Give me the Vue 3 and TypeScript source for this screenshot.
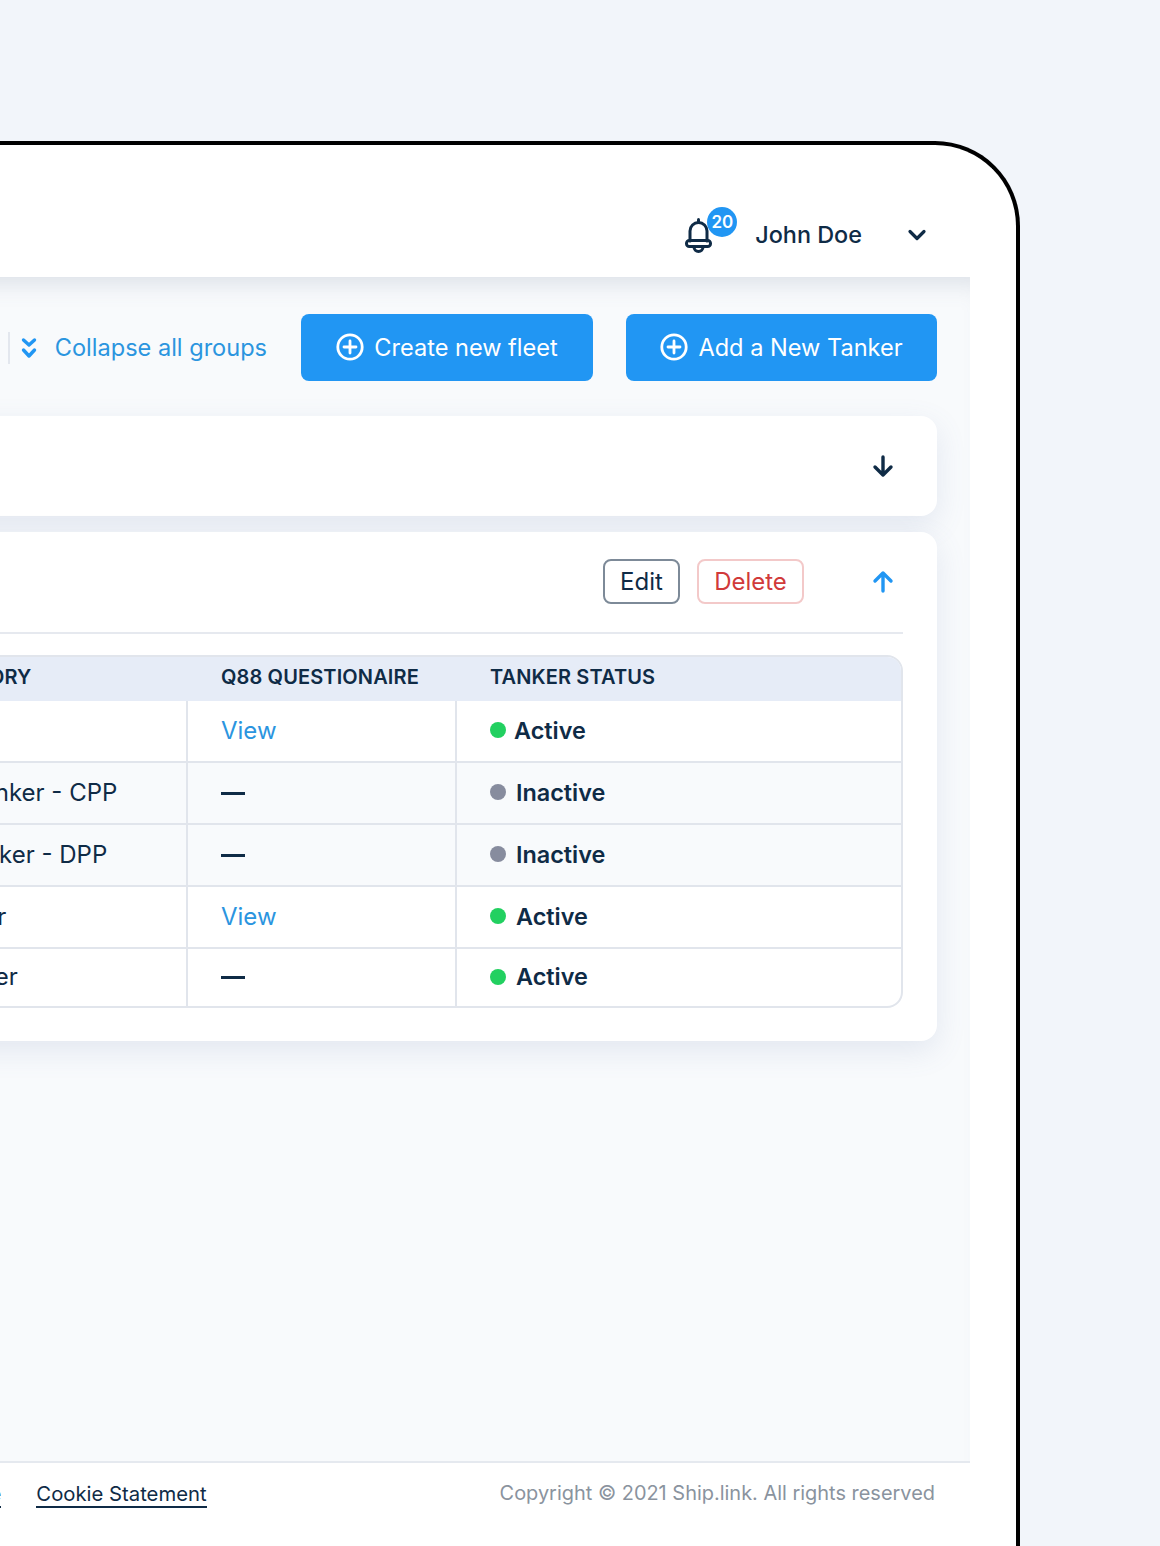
<script setup lang="ts">
interface Row {
  category: string;
  q88: boolean;
  active: boolean;
  shaded: boolean;
  gap: number;
}

const rows: Row[] = [
  { category: 'Tanker', q88: true, active: true, shaded: false, gap: 8 },
  { category: 'Product Tanker - CPP', q88: false, active: false, shaded: true, gap: 10 },
  { category: 'Lighter Tanker - DPP', q88: false, active: false, shaded: true, gap: 10 },
  { category: 'Bulk Carrier', q88: true, active: true, shaded: false, gap: 10 },
  { category: 'Grain Carrier', q88: false, active: true, shaded: false, gap: 10 },
];
</script>

<template>
  <div class="page">
    <div class="frame">
      <header class="topbar">
        <div class="bell">
          <svg width="30" height="36" viewBox="0 0 30 36" fill="none" stroke="#0f2b46" stroke-width="3" stroke-linecap="round" stroke-linejoin="round">
            <path d="M15.5 2.5v3" />
            <path d="M7 24V14a8.5 8.5 0 0 1 17 0v10" />
            <rect x="3.5" y="23.5" width="24" height="6" rx="2.8" />
            <path d="M11 30a4.5 4.5 0 0 0 9 0" />
          </svg>
          <span class="badge">20</span>
        </div>
        <span class="user">John Doe</span>
        <svg class="caret" width="20" height="12" viewBox="0 0 20 12" fill="none" stroke="#0f2b46" stroke-width="3.2" stroke-linecap="round" stroke-linejoin="round">
          <path d="M3 2.5l7 7 7-7" />
        </svg>
      </header>

      <main class="main">
        <div class="toolbar">
          <span class="divider"></span>
          <svg class="chevrons" width="16" height="22" viewBox="0 0 16 22" fill="none" stroke="#2196f3" stroke-width="3.4" stroke-linecap="round" stroke-linejoin="round">
            <path d="M2.5 3l5.5 5 5.5-5" />
            <path d="M2.5 13l5.5 6 5.5-6" />
          </svg>
          <span class="collapse">Collapse all groups</span>
          <button class="primary fleet">
            <svg width="28" height="28" viewBox="0 0 28 28" fill="none" stroke="#fff" stroke-width="2.8" stroke-linecap="round">
              <circle cx="14" cy="14" r="12.2" />
              <path d="M14 8v12M8 14h12" />
            </svg>
            Create new fleet
          </button>
          <button class="primary tanker">
            <svg width="28" height="28" viewBox="0 0 28 28" fill="none" stroke="#fff" stroke-width="2.8" stroke-linecap="round">
              <circle cx="14" cy="14" r="12.2" />
              <path d="M14 8v12M8 14h12" />
            </svg>
            Add a New Tanker
          </button>
        </div>

        <section class="card collapsed">
          <svg class="arrow" width="24" height="24" viewBox="0 0 24 24" fill="none" stroke="#0f2b46" stroke-width="3.4" stroke-linecap="round" stroke-linejoin="round">
            <path d="M12 3v18M4 13l8 8 8-8" />
          </svg>
        </section>

        <section class="card expanded">
          <div class="card-head">
            <button class="edit">Edit</button>
            <button class="delete">Delete</button>
            <svg class="arrow" width="24" height="24" viewBox="0 0 24 24" fill="none" stroke="#2196f3" stroke-width="3.4" stroke-linecap="round" stroke-linejoin="round">
              <path d="M12 21V3M4 11l8-8 8 8" />
            </svg>
          </div>

          <div class="table">
            <div class="row head">
              <div class="cell">SHIP CATEGORY</div>
              <div class="cell">Q88 QUESTIONAIRE</div>
              <div class="cell">TANKER STATUS</div>
            </div>
            <div v-for="row in rows" :key="row.category" class="row" :class="{ shaded: row.shaded }">
              <div class="cell">{{ row.category }}</div>
              <div class="cell sep">
                <a v-if="row.q88" class="view">View</a>
                <span v-else class="dash"></span>
              </div>
              <div class="cell sep status" :style="{ gap: row.gap + 'px' }">
                <span class="dot" :class="{ off: !row.active }"></span>
                {{ row.active ? 'Active' : 'Inactive' }}
              </div>
            </div>
          </div>
        </section>
      </main>

      <footer class="footer">
        <div class="links">
          <a>Terms of Service</a>
          <a>Cookie Statement</a>
        </div>
        <span class="copy">Copyright © 2021 Ship.link. All rights reserved</span>
      </footer>
    </div>
  </div>
</template>

<style>
html,
body {
  margin: 0;
  background: #f2f5fa;
}
</style>

<style scoped>
.page {
  height: 1546px;
  overflow: hidden;
  background: #f2f5fa;
  font-family: Inter, "Liberation Sans", sans-serif;
  color: #0f2b46;
}

.frame {
  box-sizing: border-box;
  width: 1420px;
  height: 1405px;
  margin: 141px 0 0 -400px;
  padding-right: 46px;
  background: #fff;
  border-top: 4px solid #000;
  border-right: 4px solid #000;
  border-top-right-radius: 85px;
  display: flex;
  flex-direction: column;
}

.topbar {
  height: 132px;
  box-sizing: border-box;
  padding: 48px 43px 0 0;
  display: flex;
  align-items: center;
  justify-content: flex-end;
}

.bell {
  position: relative;
  width: 30px;
  height: 36px;
  margin-right: 42px;
}

.bell svg {
  display: block;
}

.badge {
  position: absolute;
  left: 24px;
  top: -10px;
  width: 30px;
  height: 30px;
  border-radius: 50%;
  background: #2196f3;
  color: #fff;
  font-size: 17px;
  font-weight: 600;
  line-height: 30px;
  text-align: center;
}

.user {
  font-size: 23.4px;
  font-weight: 500;
  margin: 0 45px 2px 0;
}

.main {
  flex: 1;
  box-sizing: border-box;
  padding: 37px 33px 0 0;
  background: #f8fafc;
  box-shadow: inset 0 24px 24px -18px rgba(90, 105, 135, 0.18);
}

.toolbar {
  display: flex;
  align-items: center;
  justify-content: flex-end;
  height: 67px;
  margin-bottom: 35px;
}

.divider {
  width: 2px;
  height: 32px;
  background: #e3e7ee;
  margin-right: 11px;
}

.chevrons {
  margin-right: 18px;
}

.collapse {
  font-size: 23.55px;
  color: #2b95df;
  margin-right: 34px;
}

.primary {
  box-sizing: border-box;
  height: 67px;
  padding-bottom: 2px;
  border: none;
  border-radius: 8px;
  background: #2196f3;
  color: #fff;
  font-family: inherit;
  font-size: 23.55px;
  display: flex;
  align-items: center;
  justify-content: center;
  gap: 10px;
}

.fleet {
  width: 292px;
  margin-right: 33px;
}

.tanker {
  width: 311px;
}

.card {
  background: #fff;
  border-radius: 16px;
  padding-right: 34px;
  box-shadow: 0 10px 30px rgba(100, 120, 170, 0.14);
}

.collapsed {
  height: 100px;
  margin-bottom: 16px;
  display: flex;
  align-items: center;
  justify-content: flex-end;
}

.arrow {
  display: block;
  margin-right: 8px;
}

.expanded {
  height: 509px;
}

.card-head {
  box-sizing: border-box;
  height: 102px;
  padding-bottom: 1px;
  border-bottom: 2px solid #e6e9ef;
  display: flex;
  align-items: center;
  justify-content: flex-end;
}

.edit,
.delete {
  box-sizing: border-box;
  height: 45px;
  border-radius: 8px;
  background: #fff;
  font-family: inherit;
  font-size: 24px;
}

.edit {
  width: 77px;
  border: 2px solid #7d8a98;
  color: #0f2b46;
  margin-right: 17px;
}

.delete {
  width: 107px;
  border: 2px solid #f3c9c9;
  color: #d13a3a;
  margin-right: 67px;
}

.table {
  margin-top: 21px;
  border: 2px solid #e1e5ec;
  border-radius: 16px;
  overflow: hidden;
}

.row {
  display: grid;
  grid-template-columns: 1fr 269px 446px;
  height: 62px;
  box-sizing: border-box;
  border-bottom: 2px solid #e1e5ec;
  font-size: 24px;
}

.row:last-child {
  border-bottom: none;
  height: 57px;
}

.row.shaded {
  background: #f8fafc;
}

.row.head {
  height: 44px;
  background: #e6ecf7;
  border-bottom: none;
  font-size: 20px;
  font-weight: 600;
  letter-spacing: 0.12px;
}

.cell {
  display: flex;
  align-items: center;
  padding: 0 0 2px 33px;
  box-sizing: border-box;
}

.cell:first-child {
  padding-left: 270px;
}

.head .cell {
  padding-bottom: 4px;
}

.head .cell:first-child {
  padding-left: 267px;
}

.head .cell:not(:first-child) {
  padding-left: 35px;
}

.sep {
  border-left: 2px solid #e1e5ec;
}

.view {
  color: #2b95df;
}

.dash {
  width: 24px;
  height: 3px;
  margin-top: 2px;
  background: #0f2b46;
}

.status {
  font-size: 23.4px;
  font-weight: 600;
}

.dot {
  width: 16px;
  height: 16px;
  border-radius: 50%;
  background: #22d060;
}

.dot.off {
  background: #878c9e;
}

.footer {
  box-sizing: border-box;
  flex: none;
  height: 85px;
  border-top: 2px solid #e5e9ef;
  padding: 18px 35px 0 0;
  display: flex;
  justify-content: space-between;
  align-items: flex-start;
  font-size: 20.3px;
}

.links {
  display: flex;
  gap: 35px;
  padding-left: 238px;
}

.links a {
  border-bottom: 2px solid #0f2b46;
}

.copy {
  font-size: 19.95px;
  color: #8a939e;
}
</style>
